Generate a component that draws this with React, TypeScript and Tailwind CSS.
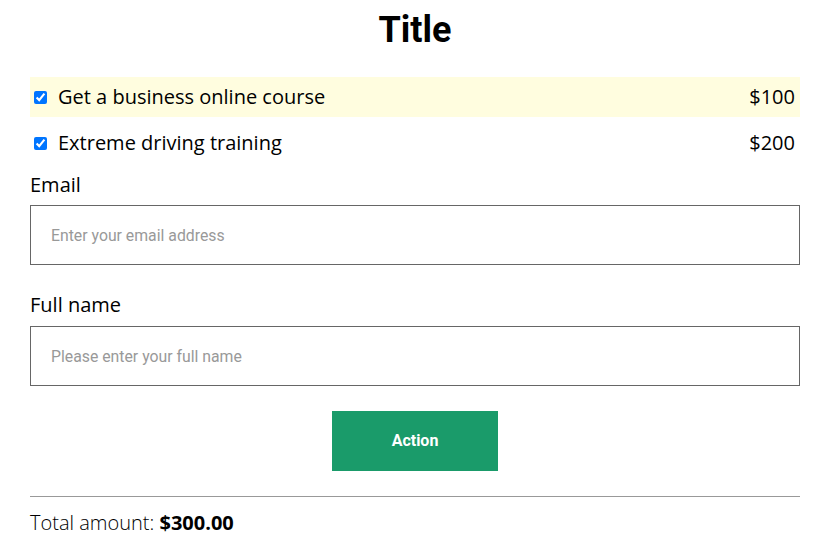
import React, { useState } from 'react';

const items = [
  { id: 1, name: 'Get a business online course', price: 100 },
  { id: 2, name: 'Extreme driving training', price: 200 },
];

const App = () => {
  const [checked, setChecked] = useState<Record<number, boolean>>({ 1: true, 2: true });
  const total = items.filter((i) => checked[i.id]).reduce((s, i) => s + i.price, 0);

  return (
    <div className="pl-[30px] pr-[29px] pt-[8px] font-['Open_Sans',sans-serif] text-black">
      <h1 className="text-center font-['Roboto',sans-serif] text-[36px] font-bold leading-[44px]">Title</h1>

      <div className="mt-[25px]">
        {items.map((item, idx) => (
          <label
            key={item.id}
            className={`flex h-[40px] items-center pl-[4px] pr-[5px] ${idx === 0 ? 'bg-[#fffddf]' : ''} ${idx > 0 ? 'mt-[6px]' : ''}`}
          >
            <input
              type="checkbox"
              className="m-0 h-[13px] w-[13px] accent-[#0075ff]"
              checked={!!checked[item.id]}
              onChange={() => setChecked({ ...checked, [item.id]: !checked[item.id] })}
            />
            <span className="ml-[11px] flex-1 text-[20px]">{item.name}</span>
            <span className="text-[20px]">${item.price}</span>
          </label>
        ))}
      </div>

      <div className="mt-[8px]">
        <div className="text-[20px] leading-[28px]">Email</div>
        <input
          className="mt-[6px] block h-[60px] w-full border border-[#666] px-[20px] font-['Roboto',sans-serif] text-[15.8px] placeholder:text-[#999] outline-none"
          placeholder="Enter your email address"
        />
      </div>

      <div className="mt-[26px]">
        <div className="text-[20px] leading-[28px]">Full name</div>
        <input
          className="mt-[7px] block h-[60px] w-full border border-[#666] px-[20px] font-['Roboto',sans-serif] text-[15.8px] placeholder:text-[#999] outline-none"
          placeholder="Please enter your full name"
        />
      </div>

      <div className="mt-[25px] flex justify-center">
        <button className="h-[60px] w-[166px] bg-[#1a9b6a] font-['Roboto',sans-serif] text-[16px] font-bold text-white">
          Action
        </button>
      </div>

      <hr className="mt-[25px] border-t border-[#999]" />

      <div className="mt-[12px] text-[20px] font-light leading-[28px]">
        Total amount: <span className="font-bold">${total.toFixed(2)}</span>
      </div>
    </div>
  );
};

export default App;
